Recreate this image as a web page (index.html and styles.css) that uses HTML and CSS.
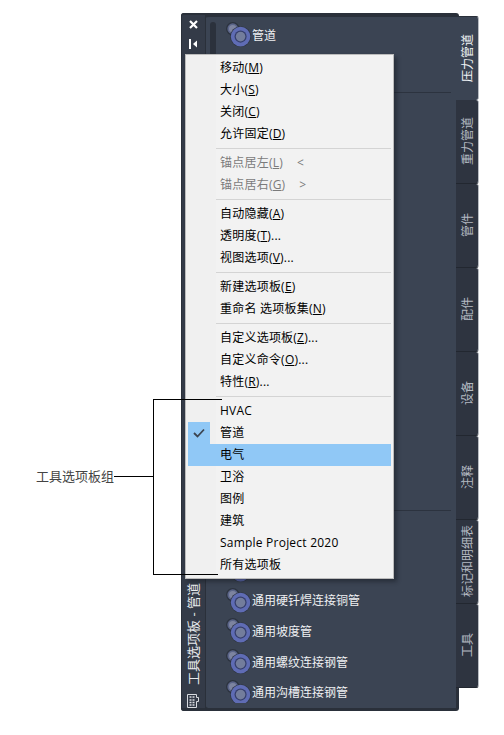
FILE: index.html
```html
<!DOCTYPE html>
<html>
	<head>
		<title>工具选项板组</title>
		<meta name="viewport" content="width=device-width, initial-scale=1.0">
		<link rel="stylesheet" href="styles.css">
	</head>
	<body>
		<svg class="defs" width="0" height="0">
			<symbol id="pipe" viewBox="0 0 24 24">
				<circle cx="6.5" cy="6.5" r="6.5" fill="#2c333f"/>
				<circle cx="6.5" cy="6.5" r="5.2" fill="#5a6488"/>
				<circle cx="6.5" cy="6.5" r="3.6" fill="#7d84a0"/>
				<circle cx="14" cy="14" r="10" fill="#2c333f"/>
				<circle cx="14" cy="14" r="9.4" fill="#5f6cb4"/>
				<circle cx="14" cy="14" r="5.8" fill="#363f6c"/>
				<circle cx="14" cy="14" r="4.6" fill="#737d9c"/>
			</symbol>
		</svg>

		<div class="palette">
			<div class="frame">
				<div class="strip">
					<svg class="close" width="9" height="9" viewBox="0 0 9 9">
						<path d="M1 1 L8 8 M8 1 L1 8" stroke="#ffffff" stroke-width="2.2"/>
					</svg>
					<svg class="pin" width="9" height="10" viewBox="0 0 9 10">
						<rect x="0" y="0" width="2" height="10" fill="#ffffff"/>
						<path d="M4 5 L8 1.5 V8.5 Z" fill="#ffffff"/>
					</svg>
					<div class="strip-title">工具选项板 - 管道</div>
					<svg class="props" width="12" height="14" viewBox="0 0 12 14">
						<path d="M.5.5 H9.5 V3.5 H11.5 V7.5 H9.5 V13.5 H.5 Z" fill="none" stroke="#d8dbe0"/>
						<path d="M2.5 3 H4.5 M5.5 3 H7.5 M2.5 6 H4.5 M5.5 6 H7.5 M2.5 8.5 H4.5 M5.5 8.5 H7.5 M2.5 11 H4.5 M5.5 11 H7.5" stroke="#d8dbe0" stroke-width="1.4"/>
					</svg>
				</div>

				<div class="panel">
					<div class="scrollbar"></div>
					<div class="tool tool-top">
						<svg class="tool-icon"><use href="#pipe"/></svg>
						<span>管道</span>
					</div>
					<div class="rule rule-top"></div>
					<div class="rule rule-low"></div>
					<div class="tools-bottom">
						<div class="tool">
							<svg class="tool-icon"><use href="#pipe"/></svg>
						</div>
						<div class="tool">
							<svg class="tool-icon"><use href="#pipe"/></svg>
							<span>通用硬钎焊连接铜管</span>
						</div>
						<div class="tool">
							<svg class="tool-icon"><use href="#pipe"/></svg>
							<span>通用坡度管</span>
						</div>
						<div class="tool">
							<svg class="tool-icon"><use href="#pipe"/></svg>
							<span>通用螺纹连接钢管</span>
						</div>
						<div class="tool">
							<svg class="tool-icon"><use href="#pipe"/></svg>
							<span>通用沟槽连接钢管</span>
						</div>
					</div>
				</div>
			</div>

			<div class="tabs">
				<div class="tab active"><span>压力管道</span></div>
				<div class="tab"><span>重力管道</span></div>
				<div class="tab"><span>管件</span></div>
				<div class="tab"><span>配件</span></div>
				<div class="tab"><span>设备</span></div>
				<div class="tab"><span>注释</span></div>
				<div class="tab"><span>标记和明细表</span></div>
				<div class="tab"><span>工具</span></div>
			</div>

			<div class="menu">
				<div class="item">移动(<u>M</u>)</div>
				<div class="item">大小(<u>S</u>)</div>
				<div class="item">关闭(<u>C</u>)</div>
				<div class="item">允许固定(<u>D</u>)</div>
				<div class="sep"></div>
				<div class="item off">锚点居左(<u>L</u>)<span class="key">&lt;</span></div>
				<div class="item off">锚点居右(<u>G</u>)<span class="key">&gt;</span></div>
				<div class="sep"></div>
				<div class="item">自动隐藏(<u>A</u>)</div>
				<div class="item">透明度(<u>T</u>)...</div>
				<div class="item">视图选项(<u>V</u>)...</div>
				<div class="sep"></div>
				<div class="item">新建选项板(<u>E</u>)</div>
				<div class="item">重命名 选项板集(<u>N</u>)</div>
				<div class="sep"></div>
				<div class="item">自定义选项板(<u>Z</u>)...</div>
				<div class="item">自定义命令(<u>O</u>)...</div>
				<div class="item">特性(<u>R</u>)...</div>
				<div class="sep"></div>
				<div class="item">HVAC</div>
				<div class="item checked">
					<span class="check">
						<svg width="12" height="10" viewBox="0 0 12 10"><path d="M1 5 L4.5 8.5 L11 1.5" fill="none" stroke="#3c4450" stroke-width="1.8"/></svg>
					</span>
					管道
				</div>
				<div class="item hover">电气</div>
				<div class="item">卫浴</div>
				<div class="item">图例</div>
				<div class="item">建筑</div>
				<div class="item">Sample Project 2020</div>
				<div class="item">所有选项板</div>
			</div>
		</div>

		<div class="callout">
			<span class="callout-label">工具选项板组</span>
			<div class="callout-stem"></div>
			<div class="callout-bracket"></div>
		</div>
	</body>
</html>
```

FILE: styles.css
```css
body {
	font-family: "Open Sans", "Noto Sans CJK SC", sans-serif;
	margin: 0px;
	background-color: #ffffff;
	font-size: 12px;
}
.defs {
	position: absolute;
}

.palette {
	position: absolute;
	left: 181px;
	top: 13px;
	width: 298px;
	height: 698px;
	display: flex;
}
.frame {
	display: flex;
	flex-shrink: 0;
	width: 278px;
	height: 698px;
	box-sizing: border-box;
	background-color: #2a303a;
	border-radius: 3px;
	padding-right: 3px;
}

.strip {
	width: 24px;
	box-sizing: border-box;
	background-color: #343b48;
	border-top: 2px solid #2a303a;
	border-left: 1px solid #2a303a;
	border-bottom: 3px solid #2a303a;
	border-radius: 3px 0px 0px 3px;
	display: flex;
	flex-direction: column;
	align-items: center;
	color: #ffffff;
}
.close {
	margin-top: 5px;
}
.pin {
	margin-top: 10px;
}
.strip-title {
	margin-top: auto;
	margin-bottom: 9px;
	margin-right: 2px;
	writing-mode: vertical-rl;
	text-orientation: sideways;
	transform: rotate(180deg);
	font-size: 13px;
	line-height: 16px;
	white-space: nowrap;
	color: #e8eaed;
}
.props {
	margin-right: 2px;
}

.panel {
	position: relative;
	width: 251px;
	box-sizing: border-box;
	background-color: #3b4453;
	border-top: 4px solid #2a303a;
	border-bottom: 3px solid #2a303a;
	border-left: 1px solid #2a303a;
	border-radius: 5px 0px 0px 5px;
	overflow: hidden;
	color: #eef0f2;
}
.scrollbar {
	position: absolute;
	left: 4px;
	top: 5px;
	width: 6px;
	height: 34px;
	border-radius: 3px;
	background-color: #2b313c;
}
.tool {
	display: flex;
	align-items: center;
	gap: 1px;
	height: 31px;
	padding-left: 20px;
}
.tool-top {
	margin-top: 2px;
}
.tool-icon {
	width: 25px;
	height: 25px;
	flex-shrink: 0;
}
.rule {
	position: absolute;
	left: 100px;
	width: 145px;
	height: 1px;
	background-color: #2c333f;
}
.rule-top {
	top: 75px;
}
.rule-low {
	top: 493px;
}
.tools-bottom {
	position: absolute;
	left: 0px;
	top: 537px;
	height: 149px;
	overflow: hidden;
}
.tools-bottom .tool {
	height: 30.75px;
}

.tabs {
	position: relative;
	flex-shrink: 0;
	width: 23px;
	height: 672px;
	margin-top: 3px;
	margin-left: -3px;
	display: flex;
	flex-direction: column;
}
.tab {
	height: 84px;
	box-sizing: border-box;
	padding-left: 2px;
	background-color: #2e3440;
	border-bottom: 1px solid #222730;
	border-right: 1px solid #b9bdc3;
	border-radius: 0px 3px 3px 0px;
	display: flex;
	align-items: center;
	justify-content: center;
	color: #b4b9c2;
}
.tab.active {
	background-color: #3b4453;
	color: #f2f4f6;
	border-top: 1px solid #2a303a;
	border-bottom: none;
}
.tab span {
	writing-mode: vertical-rl;
	text-orientation: sideways;
	transform: rotate(180deg);
	line-height: 14px;
	white-space: nowrap;
}

.menu {
	position: absolute;
	left: 4px;
	top: 41px;
	width: 209px;
	height: 525px;
	box-sizing: border-box;
	padding: 2px 2px 0px 2px;
	background: linear-gradient(90deg, #f0f0f0 30px, #f2f2f2 30px);
	border: 1px solid #bcbcbc;
	box-shadow: 3px 3px 4px rgba(20, 24, 30, 0.45);
	color: #000000;
}
.item {
	position: relative;
	height: 22px;
	line-height: 22px;
	padding-left: 32px;
	letter-spacing: 0.22px;
}
.off {
	color: #7b7b7b;
}
.key {
	margin-left: 14px;
}
.sep {
	height: 1px;
	margin: 3px 0px 3px 28px;
	background-color: #d4d4d4;
}
.hover {
	background-color: #90c8f6;
}
.check {
	position: absolute;
	left: 0px;
	top: 0px;
	width: 22px;
	height: 22px;
	background-color: #90c8f6;
	display: flex;
	align-items: center;
	justify-content: center;
}

.callout {
	position: absolute;
	left: 0px;
	top: 0px;
}
.callout-label {
	position: absolute;
	left: 36px;
	top: 467px;
	width: 80px;
	font-size: 13px;
	line-height: 18px;
	color: #444444;
}
.callout-stem {
	position: absolute;
	left: 114px;
	top: 476px;
	width: 39px;
	height: 1px;
	background-color: #000000;
}
.callout-bracket {
	position: absolute;
	left: 153px;
	top: 399px;
	width: 64px;
	height: 174px;
	border: 1px solid #000000;
	border-right: none;
}
.callout-bracket::after {
	content: "";
	position: absolute;
	left: 64px;
	top: -1px;
	width: 4px;
	height: 1px;
	background-color: #000000;
}
```
